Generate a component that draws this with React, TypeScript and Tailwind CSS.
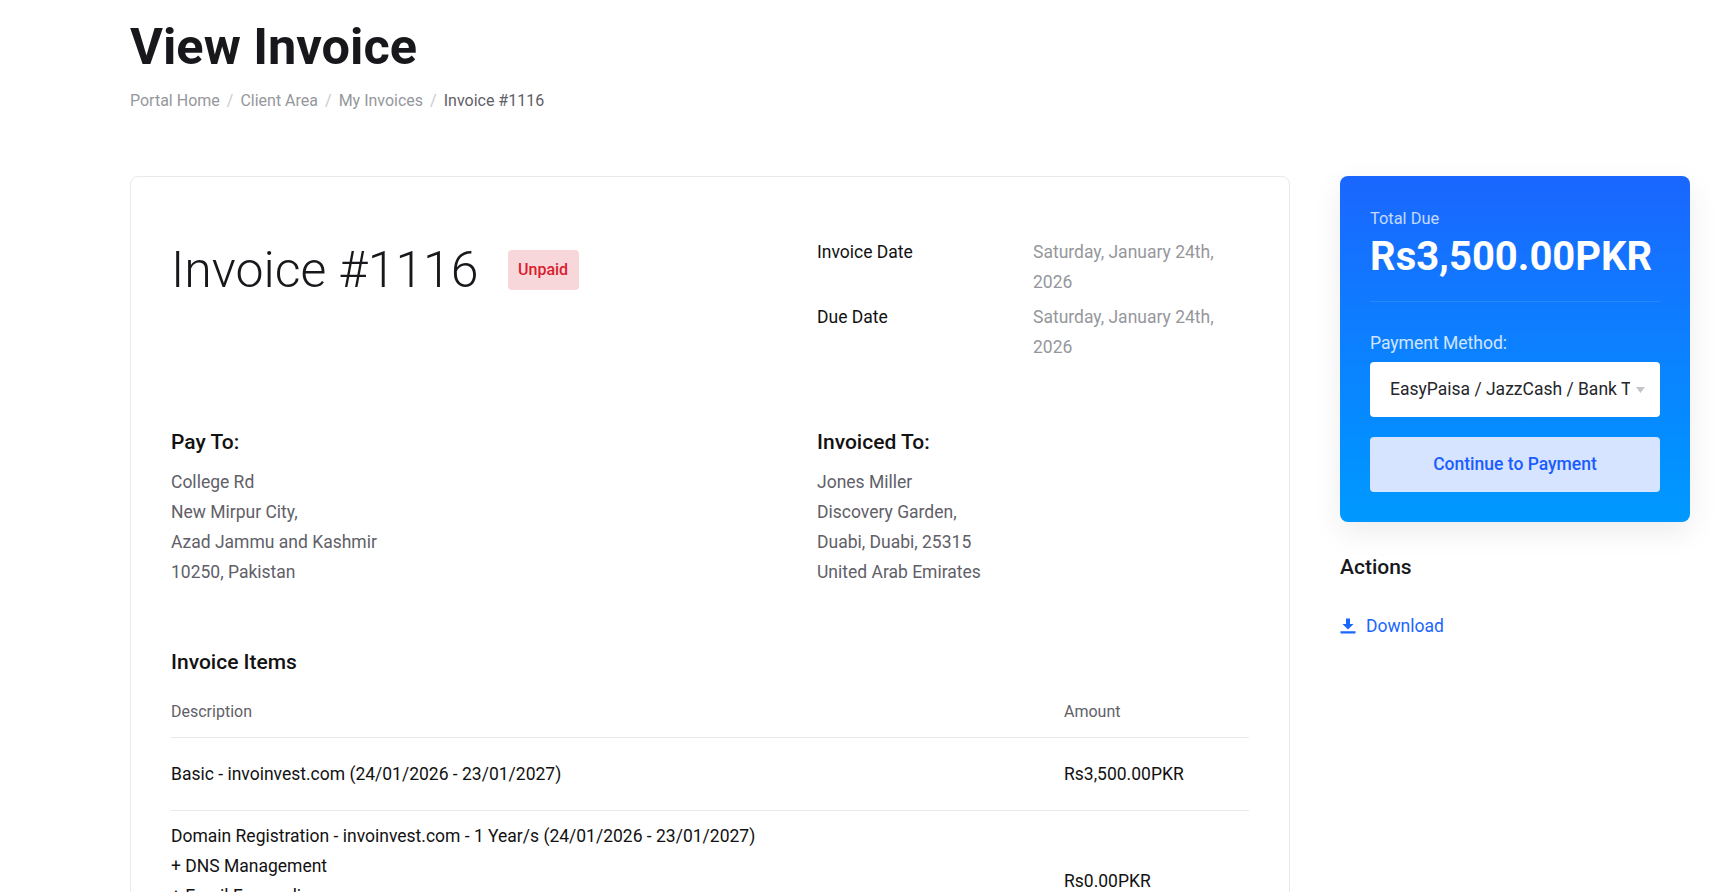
const INVOICE_TO = ["Jones Miller", "Discovery Garden,", "Duabi, Duabi, 25315", "United Arab Emirates"];
const PAY_TO = ["College Rd", "New Mirpur City,", "Azad Jammu and Kashmir", "10250, Pakistan"];
const CRUMBS = ["Portal Home", "Client Area", "My Invoices"];

function Address({ title, lines }: { title: string; lines: string[] }) {
  return (
    <div>
      <h4 className="text-[21px] leading-[30px] font-medium text-[#121212] mb-[10px]">{title}</h4>
      {lines.map((l) => (
        <p key={l} className="text-[17.5px] leading-[30px] text-[#5f6068]">{l}</p>
      ))}
    </div>
  );
}

function DateRow({ label, value }: { label: string; value: string }) {
  return (
    <div className="flex mb-[5px]">
      <div className="w-[216px] shrink-0 text-[17.5px] leading-[30px] text-[#121212]">{label}</div>
      <div className="w-[216px] text-[17.5px] leading-[30px] text-[#96979c]">{value}</div>
    </div>
  );
}

export default function App() {
  return (
    <div className="h-screen overflow-hidden bg-white font-['Roboto',sans-serif] px-[130px]">
      {/* page header */}
      <h1 className="pt-[18px] text-[50.5px] leading-[58px] font-bold text-[#18181c]">View Invoice</h1>
      <div className="mt-[13px] flex items-center text-[16px] leading-[24px] text-[#96979c]">
        {CRUMBS.map((c) => (
          <span key={c} className="flex">
            {c}
            <span className="px-[7px] text-[#c9cacd]">/</span>
          </span>
        ))}
        <span className="text-[#5f6068]">Invoice #1116</span>
      </div>

      <div className="mt-[63px] flex items-start gap-[50px]">
        {/* invoice card */}
        <div className="w-[1160px] shrink-0 border border-[#e8e9ea] rounded-[8px] px-[40px] pt-[40px] pb-10">
          <div className="flex">
            <div className="w-[646px] shrink-0 flex items-start">
              <h2 className="text-[50px] leading-[72px] font-light text-[#18181c] pt-[17px]">Invoice #1116</h2>
              <span className="ml-[29px] mt-[33px] h-[40px] w-[71px] flex items-center justify-center rounded-[4px] bg-[#f8d7da] text-[16px] font-medium text-[#dc1c2e]">
                Unpaid
              </span>
            </div>
            <div className="pt-[20px]">
              <DateRow label="Invoice Date" value="Saturday, January 24th, 2026" />
              <DateRow label="Due Date" value="Saturday, January 24th, 2026" />
            </div>
          </div>

          <div className="mt-[60px] flex">
            <div className="w-[646px] shrink-0">
              <Address title="Pay To:" lines={PAY_TO} />
            </div>
            <Address title="Invoiced To:" lines={INVOICE_TO} />
          </div>

          <h4 className="mt-[60px] text-[21px] leading-[30px] font-medium text-[#121212]">Invoice Items</h4>
          <div className="mt-[20px] flex border-b border-[#e8e9ea] pb-[10px] text-[16px] leading-[30px] text-[#5f6068]">
            <div className="w-[893px] shrink-0">Description</div>
            <div>Amount</div>
          </div>
          <div className="flex items-center border-b border-[#e8e9ea] py-[21px] text-[17.5px] leading-[30px] text-[#121212]">
            <div className="w-[893px] shrink-0">Basic - invoinvest.com (24/01/2026 - 23/01/2027)</div>
            <div>Rs3,500.00PKR</div>
          </div>
          <div className="flex items-center border-b border-[#e8e9ea] py-[10px] text-[17.5px] leading-[30px] text-[#121212]">
            <div className="w-[893px] shrink-0">
              <p>Domain Registration - invoinvest.com - 1 Year/s (24/01/2026 - 23/01/2027)</p>
              <p>+ DNS Management</p>
              <p>+ Email Forwarding</p>
              <p>+ ID Protection</p>
            </div>
            <div>Rs0.00PKR</div>
          </div>
        </div>

        {/* sidebar */}
        <div className="w-[350px] shrink-0">
          <div className="rounded-[8px] bg-gradient-to-b from-[#1a66ff] to-[#0099ff] px-[30px] pt-[31px] pb-[30px] shadow-[0_10px_30px_rgba(0,0,0,0.08)]">
            <p className="text-[16.4px] leading-[24px] text-white/75">Total Due</p>
            <p className="mt-[3px] text-[40px] leading-[46px] font-bold text-white">Rs3,500.00PKR</p>
            <div className="mt-[21px] border-t border-white/10" />
            <p className="mt-[26px] text-[17.5px] leading-[30px] text-white/80">Payment Method:</p>
            <div className="mt-[4px] h-[55px] flex items-center rounded-[4px] bg-white pl-[20px] pr-[15px]">
              <span className="w-[240px] overflow-hidden whitespace-nowrap text-[17.5px] text-[#24262b]">
                EasyPaisa / JazzCash / Bank Transfer
              </span>
              <svg className="ml-[6px] w-[9px] h-[6px] shrink-0" viewBox="0 0 9 6">
                <path d="M0 0h9L4.5 6z" fill="#c3c5ca" />
              </svg>
            </div>
            <button className="mt-[20px] w-full h-[55px] rounded-[4px] bg-[#d6e4ff] text-[17.5px] font-medium text-[#1a5cff]">
              Continue to Payment
            </button>
          </div>

          <h4 className="mt-[30px] text-[21px] leading-[30px] font-medium text-[#18181c]">Actions</h4>
          <a className="mt-[29px] flex items-center text-[17.5px] leading-[30px] text-[#1a66ff]">
            <svg className="w-[16px] h-[16px] mr-[10px]" viewBox="0 0 16 16" fill="#1a66ff">
              <path d="M6 .5h4v5.5h3.5L8 11.5 2.5 6H6zM.5 13.2h15v2.4H.5z" />
            </svg>
            Download
          </a>
        </div>
      </div>
    </div>
  );
}
